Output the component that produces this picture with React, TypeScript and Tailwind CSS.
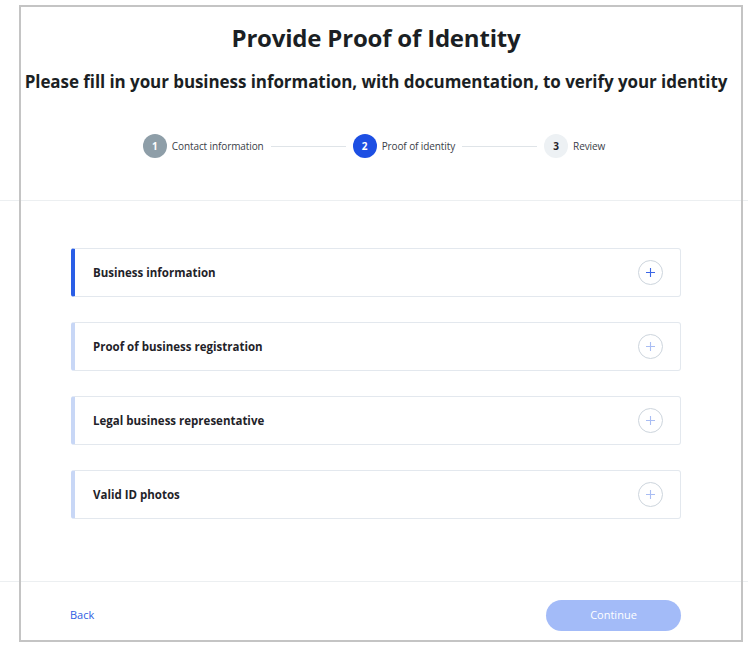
import React from "react";

/* Proof-of-identity step: header, stepper, section accordions, footer */

const SECTIONS = [
  { label: "Business information", active: true },
  { label: "Proof of business registration", active: false },
  { label: "Legal business representative", active: false },
  { label: "Valid ID photos", active: false },
];

function Step({
  n,
  label,
  state,
}: {
  n: number;
  label: string;
  state: "done" | "current" | "todo";
}) {
  const circle =
    state === "done"
      ? "bg-[#8e9ea8] text-white"
      : state === "current"
        ? "bg-[#1d4fe3] text-white"
        : "bg-[#edf1f4] text-[#1f2329]";
  return (
    <div className="flex items-center gap-[5px]">
      <span
        className={`flex h-[24px] w-[24px] items-center justify-center rounded-full text-[10px] font-bold ${circle}`}
      >
        {n}
      </span>
      <span className="text-[10px] tracking-[-0.1px] text-[#3a4048]">{label}</span>
    </div>
  );
}

function PlusCircle({ active }: { active: boolean }) {
  return (
    <span className="flex h-[25px] w-[25px] items-center justify-center rounded-full border border-[#cdd5dd]">
      <svg width="11" height="11" viewBox="0 0 11 11">
        <path
          d="M5.5 1v9M1 5.5h9"
          stroke={active ? "#3b66e6" : "#a9bdf3"}
          strokeWidth="1.1"
        />
      </svg>
    </span>
  );
}

export default function App() {
  return (
    <div
      className="relative h-[647px] w-[748px] overflow-hidden bg-white"
      style={{ fontFamily: "'Open Sans', Lato, sans-serif" }}
    >
      {/* Header */}
      <div className="flex flex-col items-center pt-[22px]">
        <h1 className="pl-[4px] text-[24px] font-bold leading-[32px] tracking-[-0.2px] text-[#1b1f24]">
          Provide Proof of Identity
        </h1>
        <p className="mt-[16px] pl-[4px] text-[17px] font-bold leading-[24px] tracking-[-0.07px] text-[#1b1f24]">
          Please fill in your business information, with documentation, to
          verify your identity
        </p>
        <div className="mt-[40px] flex items-center">
          <Step n={1} label="Contact information" state="done" />
          <span className="mx-[7px] h-px w-[75px] bg-[#dfe4e8]" />
          <Step n={2} label="Proof of identity" state="current" />
          <span className="mx-[7px] h-px w-[75px] bg-[#dfe4e8]" />
          <Step n={3} label="Review" state="todo" />
        </div>
      </div>

      <div className="mt-[42px] h-px w-full bg-[#eceff1]" />

      {/* Sections */}
      <div className="ml-[71px] mt-[47px] flex w-[610px] flex-col gap-[25px]">
        {SECTIONS.map((s) => (
          <div
            key={s.label}
            className={`flex h-[49px] items-center justify-between rounded-[3px] border border-l-[4px] border-[#e3e8ee] pl-[18px] pr-[17px] ${
              s.active ? "border-l-[#2a5ee6]" : "border-l-[#c8d7f6]"
            }`}
          >
            <span className="text-[11.5px] font-bold text-[#1f2329]">
              {s.label}
            </span>
            <PlusCircle active={s.active} />
          </div>
        ))}
      </div>

      <div className="mt-[62px] h-px w-full bg-[#eceff1]" />

      {/* Footer */}
      <div className="ml-[70px] mt-[18px] flex w-[611px] items-center justify-between">
        <button className="text-[11px] text-[#2f5ee2]">Back</button>
        <button className="h-[31px] w-[135px] rounded-full bg-[#a3bbf8] text-[11px] text-white">
          Continue
        </button>
      </div>

      {/* outer frame overlay */}
      <div className="pointer-events-none absolute left-[19px] top-[5px] h-[637px] w-[724px] border-2 border-[#c4c4c4]" />
    </div>
  );
}
